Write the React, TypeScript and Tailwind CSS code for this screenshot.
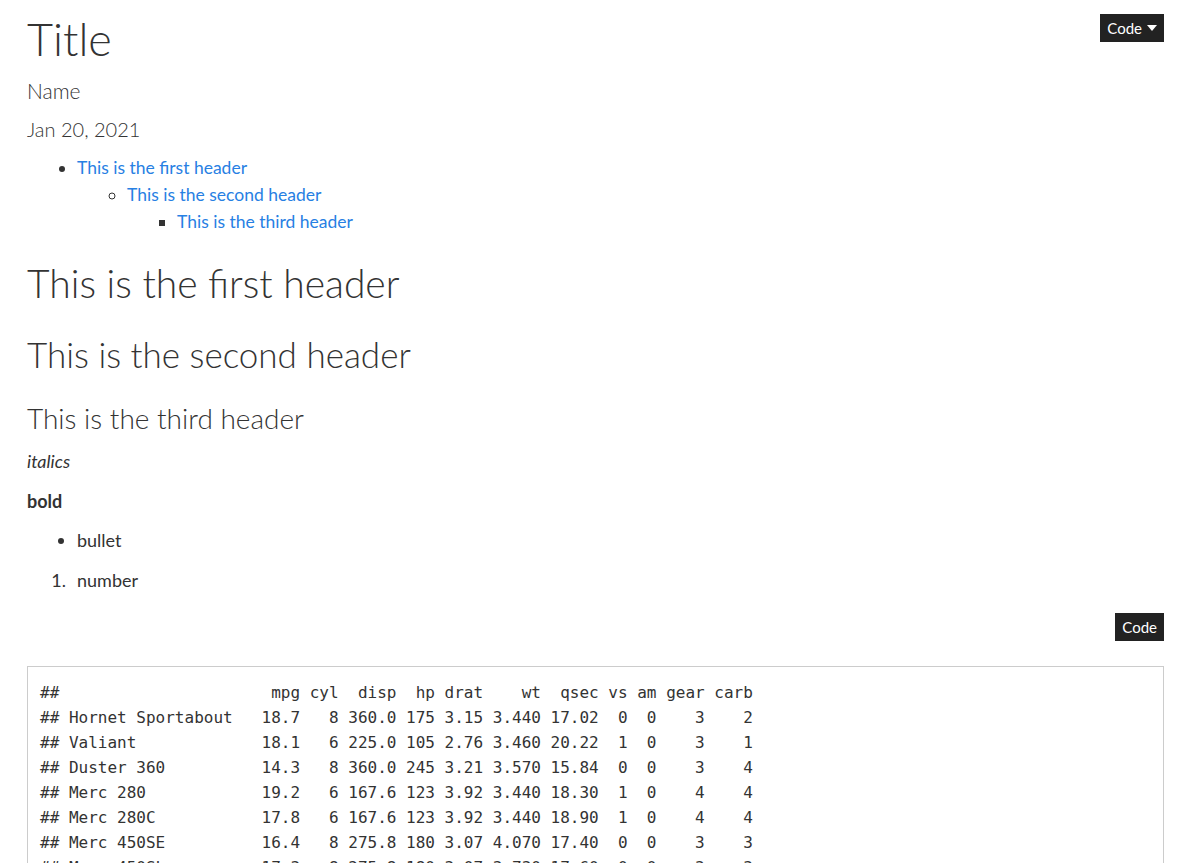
const rows = [
    '##                      mpg cyl  disp  hp drat    wt  qsec vs am gear carb',
    '## Hornet Sportabout   18.7   8 360.0 175 3.15 3.440 17.02  0  0    3    2',
    '## Valiant             18.1   6 225.0 105 2.76 3.460 20.22  1  0    3    1',
    '## Duster 360          14.3   8 360.0 245 3.21 3.570 15.84  0  0    3    4',
    '## Merc 280            19.2   6 167.6 123 3.92 3.440 18.30  1  0    4    4',
    '## Merc 280C           17.8   6 167.6 123 3.92 3.440 18.90  1  0    4    4',
    '## Merc 450SE          16.4   8 275.8 180 3.07 4.070 17.40  0  0    3    3',
    '## Merc 450SL          17.3   8 275.8 180 3.07 3.730 17.60  0  0    3    3',
    '## Merc 450SLC         15.2   8 275.8 180 3.07 3.780 18.00  0  0    3    3',
    '## Cadillac Fleetwood  10.4   8 472.0 205 2.93 5.250 17.98  0  0    3    4',
    '## Lincoln Continental 10.4   8 460.0 215 3.00 5.424 17.82  0  0    3    4',
]

const CodeButton = ({ caret }: { caret?: boolean }) => (
    <button className="flex items-center gap-[5px] bg-[#222222] text-white text-[15px] leading-none h-[28px] px-[7px] font-['Lato',sans-serif]">
        Code
        {caret && (
            <svg width="10" height="6" viewBox="0 0 10 6">
                <path d="M0 0 L10 0 L5 6 Z" fill="white" />
            </svg>
        )}
    </button>
)

const App = () => {
    return (
        <div className="bg-white min-h-screen pl-[27px] pr-[28px] text-[#333333] font-['Lato','Open_Sans',sans-serif]">
            <div className="flex justify-between items-start pt-[11px]">
                <h1 className="text-[45px] leading-[56px] font-light">Title</h1>
                <div className="mt-[3px]">
                    <CodeButton caret />
                </div>
            </div>

            <h4 className="mt-[10px] text-[21px] leading-[28px] font-light">Name</h4>
            <h4 className="mt-[10px] text-[20px] leading-[28px] font-light">Jan 20, 2021</h4>

            {/* table of contents */}
            <ul className="mt-[11px] pl-[50px] list-disc text-[17.5px] leading-[27px] text-[#333333]">
                <li>
                    <a href="#h1" className="text-[#2780e3]">This is the first header</a>
                    <ul className="pl-[50px] list-[circle]">
                        <li>
                            <a href="#h2" className="text-[#2780e3]">This is the second header</a>
                            <ul className="pl-[50px] list-[square]">
                                <li><a href="#h3" className="text-[#2780e3]">This is the third header</a></li>
                            </ul>
                        </li>
                    </ul>
                </li>
            </ul>

            <h1 id="h1" className="mt-[24px] text-[39px] leading-[48px] font-light">This is the first header</h1>
            <h2 id="h2" className="mt-[26px] text-[35px] leading-[42px] font-light">This is the second header</h2>
            <h3 id="h3" className="mt-[26px] text-[28px] leading-[34px] font-light">This is the third header</h3>

            <p className="mt-[13px] text-[18px] leading-[27px] italic">italics</p>
            <p className="mt-[13px] text-[18px] leading-[27px] font-bold">bold</p>
            <ul className="mt-[12px] pl-[50px] list-disc text-[18px] leading-[27px]">
                <li>bullet</li>
            </ul>
            <ol className="mt-[13px] text-[18px] leading-[27px]">
                <li className="flex">
                    <span className="w-[50px] pr-[11px] text-right">1.</span>
                    <span>number</span>
                </li>
            </ol>

            <div className="flex justify-end mt-[19px]">
                <CodeButton />
            </div>

            <pre className="mt-[25px] border border-[#cccccc] bg-white pt-[13px] pb-[13px] px-[12px] font-['DejaVu_Sans_Mono',monospace] text-[16px] leading-[25px] text-[#333333]">
                {rows.join('\n')}
            </pre>
        </div>
    )
}

export default App
